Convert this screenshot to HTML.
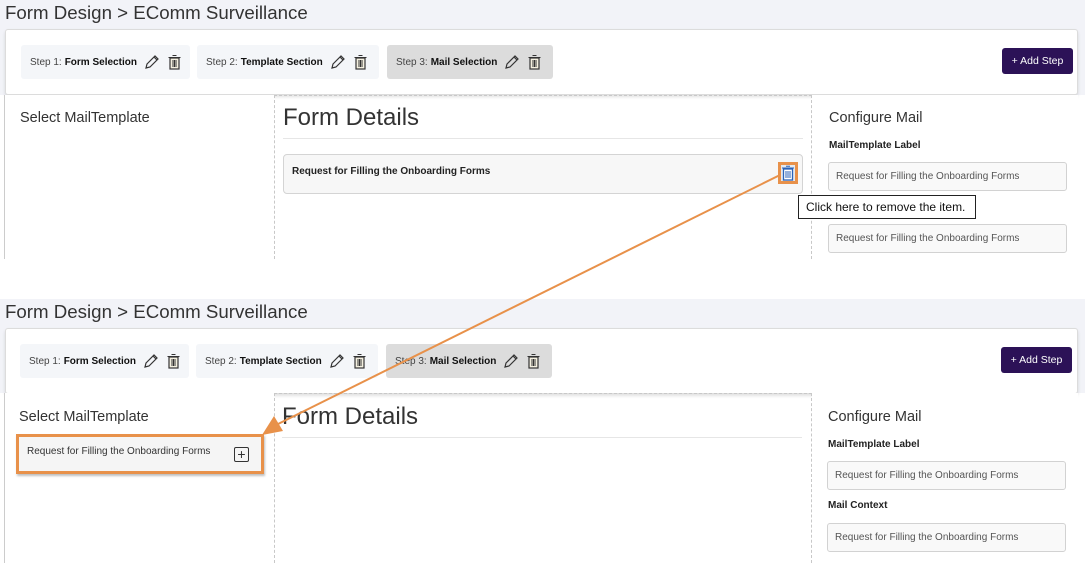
<!DOCTYPE html>
<html><head><meta charset="utf-8"><style>
*{margin:0;padding:0;box-sizing:border-box}
body{width:1085px;height:563px;overflow:hidden;background:#fff;font-family:"Liberation Sans",Arial,sans-serif;position:relative;color:#222}
.abs{position:absolute}
.hdr{position:absolute;left:0;width:1085px;background:#f2f3f8}
.title{position:absolute;left:5px;font-size:18.7px;color:#333}
.bar{position:absolute;left:5px;width:1073px;height:66px;background:#fff;border:1px solid #dcdcdc;border-radius:3px;box-shadow:0 2px 3px rgba(0,0,0,.12)}
.pill{position:absolute;height:34px;background:#f4f6f9;border-radius:3px;font-size:10px;color:#444;display:flex;align-items:center;padding-left:9px}
.pill b{color:#111;margin-left:3px}
.pill.act{background:#dcdcdc}
.pill svg{margin-left:7px}
.btn{position:absolute;width:71px;height:26px;background:#2c1257;border-radius:3px;color:#fff;font-size:10.5px;text-align:center;line-height:26px}
.lcol{position:absolute;left:4px;border-left:1px solid #ccc;background:#fff}
.dash{position:absolute;left:274px;width:538px;border:1px dashed #c8c8c8;border-bottom:none}
.h1{position:absolute;font-size:24px;color:#333}
.sub{position:absolute;font-size:14.5px;color:#333}
.lbl{position:absolute;font-size:10px;font-weight:bold;color:#222}
.inp{position:absolute;left:828px;width:239px;height:29px;border:1px solid #d2d2d2;border-radius:3px;background:#f9f9f9;font-size:10px;color:#555;padding-left:7px;line-height:28px}
.card{position:absolute;border:1px solid #d4d4d4;border-radius:4px;background:#f7f7f7;font-size:10px;color:#222}
</style></head><body>

<!-- TOP PANEL -->
<div class="hdr" style="top:0;height:95px"></div>
<div class="title" style="top:2px">Form Design &gt; EComm Surveillance</div>
<div class="bar" style="top:29px"></div>
<div class="lcol" style="top:95px;width:270px;height:164px"></div>
<div class="dash" style="top:95px;height:164px"></div>
<div class="abs" style="left:812px;top:95px;width:266px;height:164px;background:#fff"></div>
<div class="sub" style="left:20px;top:110px">Select MailTemplate</div>
<div class="h1" style="left:283px;top:104px">Form Details</div>
<div class="abs" style="left:283px;top:138px;width:520px;height:1px;background:#e6e6e6"></div>
<div class="card" style="left:283px;top:154px;width:520px;height:40px;font-weight:bold;padding:11px 0 0 8px">Request for Filling the Onboarding Forms</div>
<div class="abs" style="left:778px;top:162px;width:20px;height:22px;border:3px solid #e8914a;background:#e4e9ef"></div>
<svg class="abs" style="left:782px;top:165px" width="12" height="16" viewBox="0 0 12 16"><rect x="1.5" y="4" width="9" height="11" fill="#fff" stroke="#2a62b8" stroke-width="1.3"/><path d="M0 3h12M4 1.2h4M4 6v7M6 6v7M8 6v7" stroke="#2a62b8" stroke-width="1"/></svg>
<div class="sub" style="left:829px;top:110px">Configure Mail</div>
<div class="lbl" style="left:829px;top:140px">MailTemplate Label</div>
<div class="inp" style="top:162px">Request for Filling the Onboarding Forms</div>
<div class="inp" style="top:224px">Request for Filling the Onboarding Forms</div>
<div class="abs" style="left:798px;top:195px;width:178px;height:24px;border:1px solid #222;background:#fff;font-size:12px;color:#111;padding:4px 0 0 7px">Click here to remove the item.</div>

<!-- BOTTOM PANEL -->
<div class="hdr" style="top:299px;height:94px"></div>
<div class="title" style="top:301px">Form Design &gt; EComm Surveillance</div>
<div class="bar" style="top:328px"></div>
<div class="lcol" style="top:393px;width:270px;height:170px"></div>
<div class="dash" style="top:393px;height:170px"></div>
<div class="abs" style="left:812px;top:393px;width:266px;height:170px;background:#fff"></div>
<div class="sub" style="left:19px;top:409px">Select MailTemplate</div>
<div class="h1" style="left:282px;top:403px">Form Details</div>
<div class="abs" style="left:282px;top:437px;width:520px;height:1px;background:#e6e6e6"></div>
<div class="abs" style="left:16px;top:434px;width:248px;height:40px;border:3px solid #e8914a;box-shadow:1px 2px 2px rgba(0,0,0,.25);background:#f5f5f5;font-size:10px;color:#333;padding:9px 0 0 8px">Request for Filling the Onboarding Forms</div>
<div class="abs" style="left:234px;top:447px;width:15px;height:15px;border:1.3px solid #333;border-radius:2px;font-size:14px;line-height:12px;text-align:center;color:#333">+</div>
<div class="sub" style="left:828px;top:409px">Configure Mail</div>
<div class="lbl" style="left:828px;top:439px">MailTemplate Label</div>
<div class="inp" style="left:827px;top:461px">Request for Filling the Onboarding Forms</div>
<div class="lbl" style="left:828px;top:500px">Mail Context</div>
<div class="inp" style="left:827px;top:523px">Request for Filling the Onboarding Forms</div>

<!-- pills top -->
<div class="pill" style="left:21px;top:45px;width:169px">Step 1:<b>Form Selection</b><svg width="16" height="16" viewBox="0 0 16 16"><path d="M2 14l1-4 8-8 3 3-8 8z M10 3l3 3" fill="none" stroke="#333" stroke-width="1.2"/></svg><svg width="13" height="16" viewBox="0 0 13 16" style="margin-left:8px"><rect x="2" y="4" width="9" height="11" fill="#f4f0e0" stroke="#333" stroke-width="1.2"/><path d="M0.5 3.5h12M4.5 1.5h4M5 6v7M6.5 6v7M8 6v7" stroke="#333" stroke-width="1"/></svg></div>
<div class="pill" style="left:197px;top:45px;width:182px">Step 2:<b>Template Section</b><svg width="16" height="16" viewBox="0 0 16 16"><path d="M2 14l1-4 8-8 3 3-8 8z M10 3l3 3" fill="none" stroke="#333" stroke-width="1.2"/></svg><svg width="13" height="16" viewBox="0 0 13 16" style="margin-left:8px"><rect x="2" y="4" width="9" height="11" fill="#f4f0e0" stroke="#333" stroke-width="1.2"/><path d="M0.5 3.5h12M4.5 1.5h4M5 6v7M6.5 6v7M8 6v7" stroke="#333" stroke-width="1"/></svg></div>
<div class="pill act" style="left:387px;top:45px;width:166px">Step 3:<b>Mail Selection</b><svg width="16" height="16" viewBox="0 0 16 16"><path d="M2 14l1-4 8-8 3 3-8 8z M10 3l3 3" fill="none" stroke="#333" stroke-width="1.2"/></svg><svg width="13" height="16" viewBox="0 0 13 16" style="margin-left:8px"><rect x="2" y="4" width="9" height="11" fill="#f4f0e0" stroke="#333" stroke-width="1.2"/><path d="M0.5 3.5h12M4.5 1.5h4M5 6v7M6.5 6v7M8 6v7" stroke="#333" stroke-width="1"/></svg></div>
<div class="btn" style="left:1002px;top:48px">+ Add Step</div>
<!-- pills bottom -->
<div class="pill" style="left:20px;top:344px;width:169px">Step 1:<b>Form Selection</b><svg width="16" height="16" viewBox="0 0 16 16"><path d="M2 14l1-4 8-8 3 3-8 8z M10 3l3 3" fill="none" stroke="#333" stroke-width="1.2"/></svg><svg width="13" height="16" viewBox="0 0 13 16" style="margin-left:8px"><rect x="2" y="4" width="9" height="11" fill="#f4f0e0" stroke="#333" stroke-width="1.2"/><path d="M0.5 3.5h12M4.5 1.5h4M5 6v7M6.5 6v7M8 6v7" stroke="#333" stroke-width="1"/></svg></div>
<div class="pill" style="left:196px;top:344px;width:182px">Step 2:<b>Template Section</b><svg width="16" height="16" viewBox="0 0 16 16"><path d="M2 14l1-4 8-8 3 3-8 8z M10 3l3 3" fill="none" stroke="#333" stroke-width="1.2"/></svg><svg width="13" height="16" viewBox="0 0 13 16" style="margin-left:8px"><rect x="2" y="4" width="9" height="11" fill="#f4f0e0" stroke="#333" stroke-width="1.2"/><path d="M0.5 3.5h12M4.5 1.5h4M5 6v7M6.5 6v7M8 6v7" stroke="#333" stroke-width="1"/></svg></div>
<div class="pill act" style="left:386px;top:344px;width:166px">Step 3:<b>Mail Selection</b><svg width="16" height="16" viewBox="0 0 16 16"><path d="M2 14l1-4 8-8 3 3-8 8z M10 3l3 3" fill="none" stroke="#333" stroke-width="1.2"/></svg><svg width="13" height="16" viewBox="0 0 13 16" style="margin-left:8px"><rect x="2" y="4" width="9" height="11" fill="#f4f0e0" stroke="#333" stroke-width="1.2"/><path d="M0.5 3.5h12M4.5 1.5h4M5 6v7M6.5 6v7M8 6v7" stroke="#333" stroke-width="1"/></svg></div>
<div class="btn" style="left:1001px;top:347px">+ Add Step</div>

<!-- arrow -->
<svg class="abs" style="left:0;top:0" width="1085" height="563"><line x1="780" y1="175" x2="276" y2="425" stroke="#e8914a" stroke-width="2"/><polygon points="262,435 274,416 283,431" fill="#e8914a"/></svg>
</body></html>
